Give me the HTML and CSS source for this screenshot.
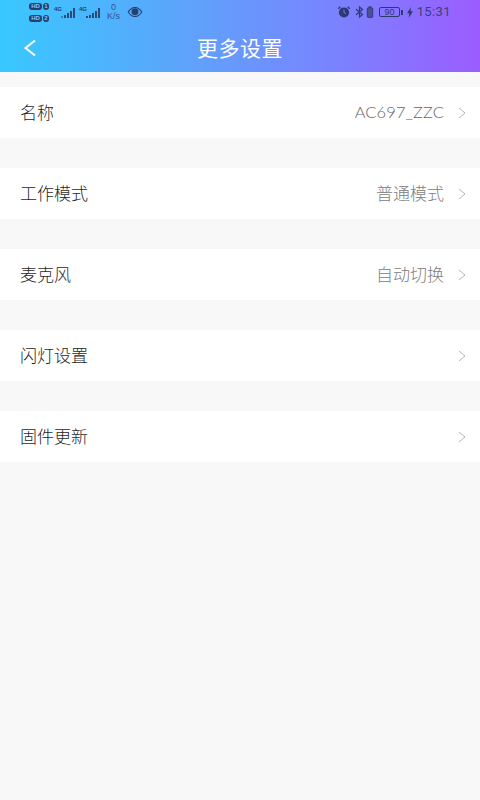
FILE: index.html
```html
<!DOCTYPE html>
<html lang="zh-CN">
<head>
<meta charset="utf-8">
<title>更多设置</title>
<link rel="stylesheet" href="styles.css">
</head>
<body>
<header class="head">
  <div class="status">
    <div class="status-left">
      <div class="sims">
        <div class="sim"><span class="hd">HD</span><span class="num">1</span></div>
        <div class="sim"><span class="hd">HD</span><span class="num">2</span></div>
      </div>
      <div class="signal first">
        <span class="net">4G</span>
        <svg width="14" height="10" viewBox="0 0 14 10"><g fill="#2b4a78"><rect x="0" y="8" width="2" height="2" opacity=".5"/><rect x="3" y="7" width="2" height="3"/><rect x="6" y="5" width="2" height="5"/><rect x="9" y="3" width="2" height="7"/><rect x="12" y="0" width="2" height="10"/></g></svg>
      </div>
      <div class="signal">
        <span class="net">4G</span>
        <svg width="14" height="10" viewBox="0 0 14 10"><g fill="#2b4a78"><rect x="0" y="8" width="2" height="2"/><rect x="3" y="7" width="2" height="3"/><rect x="6" y="5" width="2" height="5"/><rect x="9" y="3" width="2" height="7"/><rect x="12" y="0" width="2" height="10"/></g></svg>
      </div>
      <div class="speed"><span>0</span><span>K/s</span></div>
      <svg class="eye" width="16" height="10" viewBox="0 0 16 11"><path d="M.5 5.500C3 1.800 5.500.5 8 .5s5 1.300 7.500 5C13 9.200 10.500 10.500 8 10.500S3 9.200.5 5.500Z" fill="none" stroke="#24406e" stroke-width="1.200"/><circle cx="8" cy="5.300" r="3.800" fill="#24406e"/></svg>
    </div>
    <div class="status-right">
      <svg width="14" height="12" viewBox="0 0 14 13"><circle cx="7" cy="7" r="5.500" fill="#2c3a6e"/><path d="M7 4v3.200l2 1" fill="none" stroke="#8a7bff" stroke-width="1"/><path d="M.8 3 3 .8M13.200 3 11 .8" stroke="#2c3a6e" stroke-width="1.500"/></svg>
      <svg class="bt" width="9" height="12" viewBox="0 0 9 12"><path d="M1 3.200 7.500 8.500 4.500 11V1l3 2.500L1 8.800" fill="none" stroke="#2c3a6e" stroke-width="1.200"/></svg>
      <svg class="vib" width="8" height="12" viewBox="0 0 7 13"><rect x=".6" y="2" width="5.800" height="10.400" rx="1" fill="#4b4f98" stroke="#2c3a6e"/><rect x="2" y=".3" width="3" height="1.300" fill="#2c3a6e"/></svg>
      <div class="battery"><span class="level">90</span></div>
      <span class="cap"></span>
      <svg class="bolt" width="6" height="11" viewBox="0 0 6 11"><path d="M4 0 0 6.300h2.300L1.700 11 6 4.300H3.500Z" fill="#2c3a6e"/></svg>
      <span class="time">15:31</span>
    </div>
  </div>
  <div class="nav">
    <svg class="back" width="14" height="18" viewBox="0 0 14 18"><path d="M12 1.500 2.500 9l9.500 7.500" fill="none" stroke="#fff" stroke-width="2"/></svg>
    <h1 class="title">更多设置</h1>
  </div>
</header>
<main class="list">
  <div class="row"><span class="label">名称</span><span class="value latin">AC697_ZZC</span><svg class="chev" width="8" height="12" viewBox="0 0 8 12"><path d="M1 1l6 5-6 5" fill="none" stroke="#b5b5b5" stroke-width="1"/></svg></div>
  <div class="row"><span class="label">工作模式</span><span class="value">普通模式</span><svg class="chev" width="8" height="12" viewBox="0 0 8 12"><path d="M1 1l6 5-6 5" fill="none" stroke="#b5b5b5" stroke-width="1"/></svg></div>
  <div class="row"><span class="label">麦克风</span><span class="value">自动切换</span><svg class="chev" width="8" height="12" viewBox="0 0 8 12"><path d="M1 1l6 5-6 5" fill="none" stroke="#b5b5b5" stroke-width="1"/></svg></div>
  <div class="row"><span class="label">闪灯设置</span><svg class="chev" width="8" height="12" viewBox="0 0 8 12"><path d="M1 1l6 5-6 5" fill="none" stroke="#b5b5b5" stroke-width="1"/></svg></div>
  <div class="row"><span class="label">固件更新</span><svg class="chev" width="8" height="12" viewBox="0 0 8 12"><path d="M1 1l6 5-6 5" fill="none" stroke="#b5b5b5" stroke-width="1"/></svg></div>
</main>
</body>
</html>
```
FILE: styles.css
```css
* { box-sizing: border-box; margin: 0; padding: 0; }
html, body { width: 480px; height: 800px; overflow: hidden; }
body {
  background: #f8f8f8;
  font-family: "Noto Sans CJK SC", "Noto Sans", sans-serif;
}
.head {
  height: 72px;
  background: linear-gradient(90deg, #38c8ff 0%, #5fa2fb 40%, #7c80ff 72%, #9c5cff 100%);
}
.status {
  height: 24px;
  display: flex;
  justify-content: space-between;
  align-items: center;
  padding: 0 29px;
}
.status-left, .status-right { display: flex; align-items: center; }
.sims { display: flex; flex-direction: column; gap: 5px; }
.sim { display: flex; gap: 1px; height: 7px; }
.hd, .num {
  background: #24406e;
  color: #8fc4fd;
  font: bold 6px/7px "Liberation Sans", sans-serif;
  border-radius: 3px;
  text-align: center;
}
.hd { width: 13px; }
.num { width: 6px; }
.signal {
  display: flex;
  justify-content: flex-end;
  align-items: flex-end;
  margin-left: 4px;
  position: relative;
  width: 21px;
  height: 12px;
}
.signal.first { margin-left: 5px; }
.net {
  position: absolute;
  left: 0;
  top: 0;
  font: bold 6px/7px "Liberation Sans", sans-serif;
  color: #24406e;
}
.speed {
  display: flex;
  flex-direction: column;
  align-items: center;
  margin-left: 6px;
  width: 15px;
  font: 9px/9px "Liberation Sans", sans-serif;
  color: #35558c;
}
.eye { margin-left: 6px; }
.status-right { color: #2c3a6e; }
.bt { margin-left: 4px; }
.vib { margin-left: 2px; }
.battery {
  width: 21px;
  height: 10px;
  margin-left: 5px;
  border: 1px solid #2c3a6e;
  border-radius: 2px;
  display: flex;
  align-items: center;
  justify-content: center;
}
.level { font: 9px/9px "Liberation Sans", sans-serif; color: #2c3a6e; }
.cap { width: 1.500px; height: 5px; background: #2c3a6e; margin-left: 1px; }
.bolt { margin-left: 4px; }
.time { margin-left: 4px; font: 13px/16px "Roboto", sans-serif; letter-spacing: .4px; color: #39407e; }
.nav {
  height: 48px;
  display: flex;
  align-items: center;
  justify-content: center;
  position: relative;
}
.back { position: absolute; left: 23px; top: 15px; }
.title { font-size: 21px; font-weight: 400; color: #fff; letter-spacing: .5px; line-height: 28px; margin-bottom: 3px; }
.list { display: flex; flex-direction: column; gap: 30px; padding-top: 15px; }
.row {
  height: 51px;
  background: #fff;
  display: flex;
  align-items: center;
  padding: 0 14px 2px 20px;
}
.label { font-size: 17px; font-weight: 300; color: #1f1f1f; flex: 1; }
.value { font-size: 17px; font-weight: 300; color: #808080; margin-right: 14px; }
.latin { font-family: "Lato", "Noto Sans", sans-serif; font-size: 16.500px; font-weight: 300; letter-spacing: .1px; color: #666; }
.chev { flex: none; margin-top: 2px; }
```
